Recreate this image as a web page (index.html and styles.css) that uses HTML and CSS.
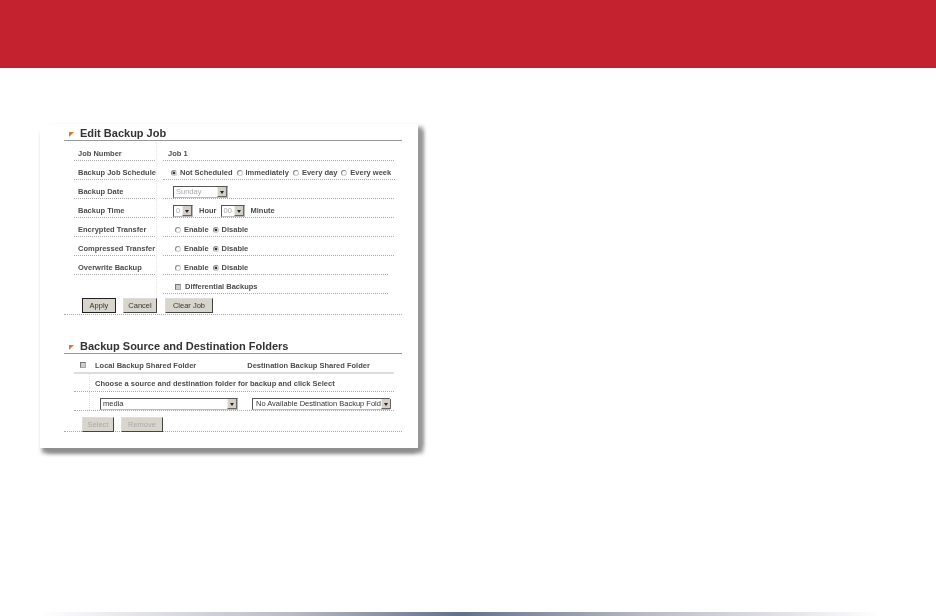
FILE: index.html
```html
<!DOCTYPE html>
<html lang="en">
<head>
    <meta charset="UTF-8">
    <title>Edit Backup Job</title>
    <link rel="stylesheet" href="styles.css">
</head>
<body>
<div class="banner"></div>
<div class="content">
    <div class="panel">
        <h2 class="heading"><span class="marker"></span>Edit Backup Job</h2>
        <div class="rows">
            <div class="row"><div class="label">Job Number</div><div class="value">Job 1</div></div>
            <div class="row">
                <div class="label">Backup Job Schedule</div>
                <div class="value value-radio">
                    <span class="radio on"></span><span class="opt">Not Scheduled</span>
                    <span class="radio"></span><span class="opt">Immediately</span>
                    <span class="radio"></span><span class="opt">Every day</span>
                    <span class="radio"></span><span class="opt">Every week</span>
                </div>
            </div>
            <div class="row">
                <div class="label">Backup Date</div>
                <div class="value value-select"><span class="select off date">Sunday<i class="arrow"></i></span></div>
            </div>
            <div class="row">
                <div class="label">Backup Time</div>
                <div class="value value-select">
                    <span class="select off hour">0<i class="arrow"></i></span><span class="opt unit">Hour</span>
                    <span class="select off minute">00<i class="arrow"></i></span><span class="opt unit">Minute</span>
                </div>
            </div>
            <div class="row">
                <div class="label">Encrypted Transfer</div>
                <div class="value value-radio indent"><span class="radio"></span><span class="opt">Enable</span><span class="radio on"></span><span class="opt">Disable</span></div>
            </div>
            <div class="row">
                <div class="label">Compressed Transfer</div>
                <div class="value value-radio indent"><span class="radio"></span><span class="opt">Enable</span><span class="radio on"></span><span class="opt">Disable</span></div>
            </div>
            <div class="row short">
                <div class="label">Overwrite Backup</div>
                <div class="value value-radio indent"><span class="radio"></span><span class="opt">Enable</span><span class="radio on"></span><span class="opt">Disable</span></div>
            </div>
            <div class="row short">
                <div class="label blank"></div>
                <div class="value value-radio indent"><span class="check"></span><span class="opt">Differential Backups</span></div>
            </div>
        </div>
        <div class="actions">
            <button type="button" class="btn default apply">Apply</button>
            <button type="button" class="btn cancel">Cancel</button>
            <button type="button" class="btn clear">Clear Job</button>
        </div>

        <h2 class="heading second"><span class="marker"></span>Backup Source and Destination Folders</h2>
        <div class="rows">
            <div class="folders-head">
                <span class="check"></span>
                <span class="opt local">Local Backup Shared Folder</span>
                <span class="opt">Destination Backup Shared Folder</span>
            </div>
            <div class="row-choose"><span class="opt">Choose a source and destination folder for backup and click Select</span></div>
            <div class="row-folders">
                <span class="select source">media<i class="arrow"></i></span>
                <span class="select dest">No Available Destination Backup Fold<i class="arrow"></i></span>
            </div>
        </div>
        <div class="actions lower">
            <button type="button" class="btn off select-btn">Select</button>
            <button type="button" class="btn off remove">Remove</button>
        </div>
    </div>
</div>
<div class="footer-bar"></div>
</body>
</html>
```

FILE: styles.css
```css
* {
    box-sizing: border-box;
}

html,
body {
    height: 100%;
}

body {
    display: flex;
    flex-direction: column;
    margin: 0;
    background: #fff;
    font-family: "Liberation Sans", Arial, sans-serif;
    color: #4c4c4c;
    overflow: hidden;
}

.banner {
    flex: none;
    height: 68px;
    background: #c4222f;
}

.content {
    flex: 1;
    padding: 56px 0 0 40px;
}

.footer-bar {
    flex: none;
    height: 4px;
    margin: 0 56px 0 40px;
    background: linear-gradient(to right, #fff, #b9bac4 30%, #5f7289 50%, #b9bac4 72%, #fff);
}

/* 画像のスクリーンショットなので少しぼかす */
.panel {
    width: 378px;
    height: 324px;
    padding: 1px 16px 0 24px;
    background: #fff;
    box-shadow: 7px 1px 4px -2px #999, 0 7px 4px -2px #8f8f8f, 6px 6px 4px -1px #8f8f8f;
    filter: blur(0.45px);
}

.heading {
    display: flex;
    align-items: center;
    height: 16px;
    margin: 0;
    padding-left: 5px;
    font-size: 11px;
    font-weight: bold;
    color: #333;
    border-bottom: 1px solid #999;
}

.heading.second {
    margin-top: 23px;
}

.marker {
    width: 0;
    height: 0;
    margin-right: 6px;
    margin-top: 3px;
    border-top: 5px solid #e8762a;
    border-right: 5px solid transparent;
}

.rows {
    margin: 1px 8px 0 10px;
}

.row {
    display: grid;
    grid-template-columns: 81px 1fr;
    column-gap: 8px;
    height: 19px;
}

.row.short {
    padding-right: 6px;
}

.label,
.value {
    display: flex;
    align-items: center;
    padding-top: 5px;
    border-bottom: 1px dotted #aaa;
    font-size: 7.5px;
    font-weight: bold;
    white-space: nowrap;
}

.label {
    position: relative;
    padding-left: 4px;
}

/* 列の間の薄い縦線 */
.label::after {
    content: "";
    position: absolute;
    top: 0;
    bottom: 0;
    right: -2px;
    border-right: 1px dotted #e8e8e8;
}

.label.blank {
    border-bottom: 0;
}

.value {
    padding-left: 5px;
}

.value-radio {
    padding-left: 8px;
}

.value-radio.indent {
    padding-left: 12px;
}

.value-select {
    padding-left: 10px;
}

.opt {
    font-size: 7.5px;
    font-weight: bold;
    white-space: nowrap;
    margin-right: 4px;
}

.unit {
    margin: 0 4px 0 6px;
}

.radio {
    flex: none;
    width: 6px;
    height: 6px;
    margin-right: 3px;
    border: 1px solid #888;
    border-right-color: #ccc;
    border-bottom-color: #ccc;
    border-radius: 50%;
    background: #fff;
}

.radio.on {
    background: radial-gradient(circle, #333 45%, #fff 60%);
}

.check {
    flex: none;
    width: 6px;
    height: 6px;
    margin-right: 4px;
    border: 1px solid #777;
    border-right-color: #aaa;
    border-bottom-color: #aaa;
    background: #ccc;
}

.select {
    display: inline-flex;
    align-items: center;
    justify-content: space-between;
    flex: none;
    height: 12px;
    padding-left: 2px;
    border: 1px solid #555;
    border-right-color: #bbb;
    border-bottom-color: #bbb;
    background: #fff;
    font-size: 7.5px;
    font-weight: normal;
    color: #333;
    white-space: nowrap;
}

.select.off {
    color: #aaa;
}

.arrow {
    position: relative;
    flex: none;
    width: 10px;
    height: 100%;
    background: #d4d0c8;
    border-left: 1px solid #eee;
    border-right: 1px solid #666;
    border-bottom: 1px solid #666;
}

.arrow::after {
    content: "";
    position: absolute;
    top: 4px;
    left: 2px;
    border-top: 3px solid #222;
    border-left: 2px solid transparent;
    border-right: 2px solid transparent;
}

.date {
    width: 55px;
}

.hour {
    width: 20px;
}

.minute {
    width: 24px;
}

.actions {
    display: flex;
    align-items: flex-start;
    height: 21px;
    padding: 4px 0 0 18px;
    border-bottom: 1px dotted #aaa;
}

.actions.lower {
    padding-top: 6px;
}

.btn {
    height: 15px;
    padding: 0;
    border: 1px solid #ddd;
    border-right-color: #444;
    border-bottom-color: #444;
    background: #d8d5cd;
    font-family: inherit;
    font-size: 7.5px;
    color: #333;
}

.btn.default {
    border: 1px solid #222;
}

.btn.off {
    color: #aaa;
}

.apply {
    width: 34px;
    margin-right: 7px;
}

.cancel {
    width: 34px;
    margin-right: 8px;
}

.clear {
    width: 48px;
}

.select-btn {
    width: 32px;
    margin-right: 7px;
}

.remove {
    width: 42px;
}

.folders-head {
    display: flex;
    align-items: center;
    height: 19px;
    padding: 3px 0 0 6px;
    border-bottom: 2px solid #ddd;
}

.local {
    margin: 0 51px 0 5px;
}

.row-choose,
.row-folders {
    position: relative;
    display: flex;
    align-items: center;
    border-bottom: 1px dotted #aaa;
}

/* 左の薄い縦線 */
.row-choose::before,
.row-folders::before {
    content: "";
    position: absolute;
    top: 0;
    bottom: 0;
    left: 15px;
    border-left: 1px dotted #ddd;
}

.row-choose {
    height: 18px;
    padding: 2px 0 0 21px;
}

.row-folders {
    gap: 14px;
    height: 19px;
    padding: 5px 0 0 26px;
}

.source {
    width: 138px;
}

.dest {
    width: 138px;
    padding-left: 3px;
}
```
